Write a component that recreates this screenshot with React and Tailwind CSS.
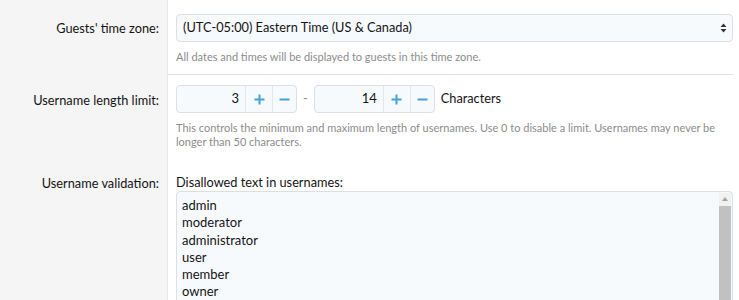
const disallowed = ["admin", "moderator", "administrator", "user", "member", "owner"];

function Spinner({ value }) {
  return (
    <div className="flex h-[28px] w-[121px] rounded-[4px] border border-[#dcdfe3] bg-[#f7fafd]">
      <div className="flex flex-1 items-center justify-end pr-[6px] text-[13px] text-[#141414]">{value}</div>
      <div className="flex w-[27px] items-center justify-center border-l border-[#e3e6ea] text-[#47a1de]">
        <svg width="11" height="11" viewBox="0 0 11 11">
          <path d="M5.5 0.5v10M0.5 5.5h10" stroke="currentColor" strokeWidth="2" />
        </svg>
      </div>
      <div className="flex w-[24px] items-center justify-center border-l border-[#e3e6ea] text-[#47a1de]">
        <svg width="11" height="11" viewBox="0 0 11 11">
          <path d="M0.5 5.5h10" stroke="currentColor" strokeWidth="2" />
        </svg>
      </div>
    </div>
  );
}

function Label({ children, className = "" }) {
  return (
    <div className={`w-[168px] shrink-0 border-r border-[#e7e7e7] bg-[#f5f5f5] pr-[8px] text-right text-[12.75px] text-[#141414] ${className}`}>
      {children}
    </div>
  );
}

export default function App() {
  return (
    <div className="flex h-[300px] w-[739px] flex-col overflow-hidden bg-white font-['Lato',sans-serif]">
      <div className="flex">
        <Label className="pt-[19px]">Guests' time zone:</Label>
        <div className="w-[565px] pl-[8px] pt-[14px]">
          <div className="flex h-[28px] items-center justify-between rounded-[4px] border border-[#dcdfe3] bg-[#f7fafd] pl-[6px] pr-[5px] text-[12.75px] text-[#141414]">
            <span>(UTC-05:00) Eastern Time (US &amp; Canada)</span>
            <svg width="7" height="10" viewBox="0 0 7 10">
              <path d="M3.5 0.5L6.5 4H0.5zM3.5 9.5L6.5 6H0.5z" fill="#333" />
            </svg>
          </div>
          <p className="mt-[7px] text-[11px] leading-[16px] text-[#8c8c8c]">All dates and times will be displayed to guests in this time zone.</p>
          <div className="mt-[9px] ml-[-8px] h-px bg-[#e2e2e2]" />
        </div>
      </div>

      <div className="flex">
        <Label className="pt-[16px]">Username length limit:</Label>
        <div className="w-[565px] pl-[8px] pt-[10px] pb-[25px]">
          <div className="flex items-center text-[12.75px] text-[#141414]">
            <Spinner value="3" />
            <span className="mx-[6px] text-[#8c8c8c]">-</span>
            <Spinner value="14" />
            <span className="ml-[6px]">Characters</span>
          </div>
          <p className="mt-[8px] w-[555px] text-[11px] leading-[14px] text-[#8c8c8c]">
            This controls the minimum and maximum length of usernames. Use 0 to disable a limit. Usernames may never be longer than 50 characters.
          </p>
        </div>
      </div>

      <div className="flex flex-1">
        <Label>Username validation:</Label>
        <div className="w-[565px] pl-[8px]">
          <div className="text-[12.75px] leading-[17px] text-[#141414]">Disallowed text in usernames:</div>
          <div className="flex h-[130px] rounded-t-[4px] border border-[#dcdfe3] bg-[#f7fafd]">
            <div className="flex-1 pl-[5px] pt-[5px] text-[13px] leading-[17.3px] text-[#141414]">
              {disallowed.map((w) => (
                <div key={w}>{w}</div>
              ))}
            </div>
            <div className="mr-[1px] mt-[1px] flex w-[12px] flex-col bg-[#f1f1f1]">
              <div className="flex h-[12px] items-center justify-center">
                <svg width="6" height="4" viewBox="0 0 6 4">
                  <path d="M3 0L6 4H0z" fill="#a3a3a3" />
                </svg>
              </div>
              <div className="mt-[1px] flex-1 bg-[#c1c1c1]" />
            </div>
          </div>
        </div>
      </div>
    </div>
  );
}
